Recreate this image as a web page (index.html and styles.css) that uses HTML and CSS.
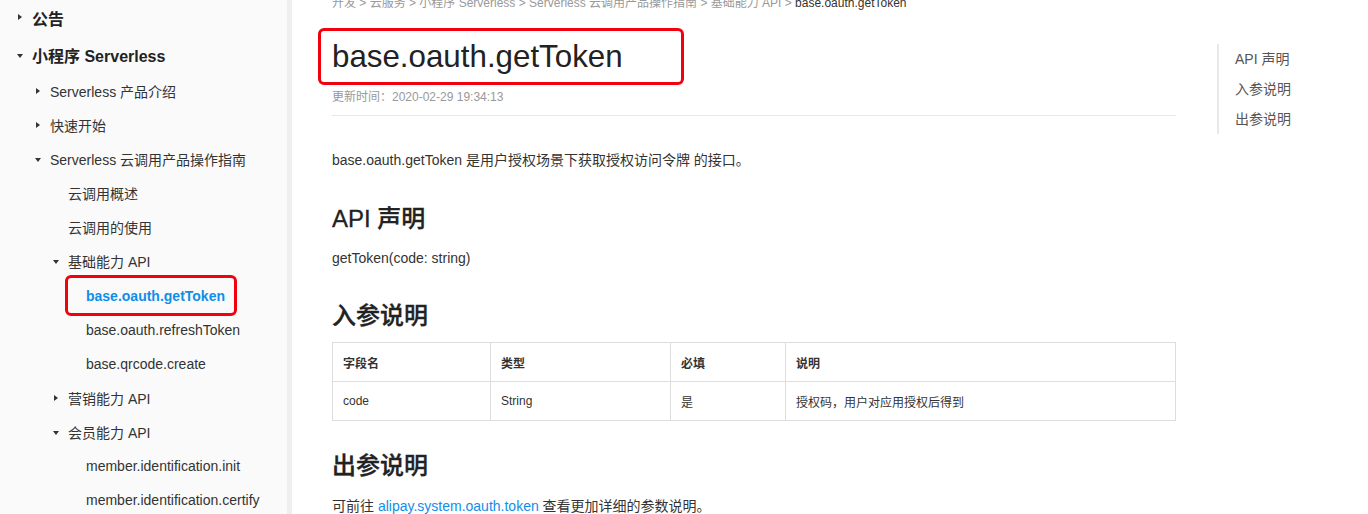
FILE: index.html
```html
<!DOCTYPE html>
<html lang="zh-CN">
<head>
<meta charset="utf-8">
<title>base.oauth.getToken</title>
<link rel="stylesheet" href="styles.css">
</head>
<body>
<div class="page">
  <aside class="sidebar">
    <ul class="nav">
      <li class="row top"><span class="caret right"></span><span>公告</span></li>
      <li class="row top"><span class="caret down"></span><span>小程序 Serverless</span></li>
      <li class="row l2"><span class="caret right"></span><span>Serverless 产品介绍</span></li>
      <li class="row l2"><span class="caret right"></span><span>快速开始</span></li>
      <li class="row l2"><span class="caret down"></span><span>Serverless 云调用产品操作指南</span></li>
      <li class="row l3 leaf"><span>云调用概述</span></li>
      <li class="row l3 leaf"><span>云调用的使用</span></li>
      <li class="row l3"><span class="caret down"></span><span>基础能力 API</span></li>
      <li class="row l4 active"><span class="mark">base.oauth.getToken</span></li>
      <li class="row l4 leaf"><span>base.oauth.refreshToken</span></li>
      <li class="row l4 leaf"><span>base.qrcode.create</span></li>
      <li class="row l3"><span class="caret right"></span><span>营销能力 API</span></li>
      <li class="row l3"><span class="caret down"></span><span>会员能力 API</span></li>
      <li class="row l4 leaf"><span>member.identification.init</span></li>
      <li class="row l4 leaf"><span>member.identification.certify</span></li>
    </ul>
  </aside>
  <main class="main">
    <div class="crumbs">开发 &gt; 云服务 &gt; 小程序 Serverless &gt; Serverless 云调用产品操作指南 &gt; 基础能力 API &gt; <span class="cur">base.oauth.getToken</span></div>
    <div class="title-box"><h1 class="title">base.oauth.getToken</h1></div>
    <div class="updated">更新时间：2020-02-29 19:34:13</div>
    <div class="rule"></div>
    <p class="text intro">base.oauth.getToken 是用户授权场景下获取授权访问令牌 的接口。</p>
    <h2 class="h2 h-api">API 声明</h2>
    <p class="text sig">getToken(code: string)</p>
    <h2 class="h2 h-in">入参说明</h2>
    <table class="params">
      <thead>
        <tr><th class="c1">字段名</th><th class="c2">类型</th><th class="c3">必填</th><th>说明</th></tr>
      </thead>
      <tbody>
        <tr><td>code</td><td>String</td><td>是</td><td>授权码，用户对应用授权后得到</td></tr>
      </tbody>
    </table>
    <h2 class="h2 h-out">出参说明</h2>
    <p class="text outro">可前往 <a class="link" href="#">alipay.system.oauth.token</a> 查看更加详细的参数说明。</p>
  </main>
  <nav class="toc">
    <div class="toc-item">API 声明</div>
    <div class="toc-item">入参说明</div>
    <div class="toc-item">出参说明</div>
  </nav>
</div>
</body>
</html>
```
FILE: styles.css
```css
* { box-sizing: border-box; }
html, body {
  margin: 0;
  padding: 0;
  height: 514px;
  overflow: hidden;
  background: #fff;
}
body {
  font-family: "Liberation Sans", Arial, "Noto Sans CJK SC", sans-serif;
  color: #333;
}
.page {
  display: flex;
  height: 514px;
  align-items: flex-start;
}
.sidebar {
  width: 292px;
  flex: none;
  height: 514px;
  background: #fafafa;
  border-right: 5px solid #efefef;
  overflow: hidden;
}
.nav {
  list-style: none;
  margin: -1px 0 0;
  padding: 0;
}
.row {
  display: flex;
  align-items: center;
  height: 34px;
  font-size: 14px;
  color: #333;
  white-space: nowrap;
}
.row.top {
  height: 37px;
  font-size: 16px;
  font-weight: bold;
  color: #222;
  padding-left: 17px;
}
.row.top + .row.top { height: 38px; }
.row.l2 { padding-left: 35px; }
.row.l3 { padding-left: 53px; }
.row.l3.leaf { padding-left: 68px; }
.row.l4 { padding-left: 86px; }
.caret {
  width: 7px;
  height: 7px;
  margin-right: 8px;
  position: relative;
  flex: none;
}
.caret.right::before {
  content: "";
  position: absolute;
  left: 1px;
  top: 0;
  border-left: 4px solid #333;
  border-top: 3.5px solid transparent;
  border-bottom: 3.5px solid transparent;
}
.caret.down::before {
  content: "";
  position: absolute;
  left: 0;
  top: 2px;
  border-top: 4px solid #333;
  border-left: 3.5px solid transparent;
  border-right: 3.5px solid transparent;
}
.row.active {
  height: 35px;
  padding-left: 65px;
}
.mark {
  display: inline-flex;
  align-items: center;
  height: 41px;
  margin: -3px 0 -3px;
  padding: 1px 9px 0 18px;
  border: 3px solid #f3000f;
  border-radius: 6px;
  color: #108ee9;
  font-weight: bold;
}

.main {
  flex: none;
  width: 884px;
  padding-left: 40px;
}
.crumbs {
  margin-top: -6px;
  font-size: 12px;
  line-height: 18px;
  color: #999;
  white-space: nowrap;
}
.crumbs .cur { color: #333; }
.title-box {
  margin-top: 16px;
  margin-left: -14px;
  width: 366px;
  height: 57px;
  border: 3px solid #f3000f;
  border-radius: 6px;
  padding: 1px 0 0 11px;
}
.title {
  margin: 0;
  font-size: 31.3px;
  line-height: 50px;
  font-weight: normal;
  color: #222;
}
.updated {
  margin-top: 3px;
  font-size: 12px;
  line-height: 18px;
  color: #999;
}
.rule {
  margin-top: 9px;
  border-top: 1px solid #e8e8e8;
}
.text {
  margin: 0;
  font-size: 14px;
  line-height: 20px;
  color: #333;
}
.intro { margin-top: 34px; }
.h2 {
  margin: 0;
  font-size: 24px;
  line-height: 32px;
  font-weight: 500;
  color: #222;
  -webkit-text-stroke: 0.3px #222;
}
.h-api { margin-top: 33px; }
.sig { margin-top: 13px; }
.h-in { margin-top: 32px; }
.params {
  margin-top: 10px;
  width: 844px;
  border-collapse: collapse;
  font-size: 12px;
  color: #333;
}
.params th, .params td {
  border: 1px solid #ddd;
  height: 39px;
  padding: 0 10px;
  text-align: left;
}
.params th { font-weight: bold; }
.params .c1 { width: 158px; }
.params .c2 { width: 180px; }
.params .c3 { width: 115px; }
.h-out { margin-top: 29px; }
.outro { margin-top: 14px; }
.link {
  color: #108ee9;
  text-decoration: none;
}

.toc {
  margin-left: 41px;
  margin-top: 44px;
  border-left: 2px solid #e8e8e8;
  padding-left: 16px;
}
.toc-item {
  font-size: 14px;
  line-height: 30px;
  color: #555;
  white-space: nowrap;
}
```
